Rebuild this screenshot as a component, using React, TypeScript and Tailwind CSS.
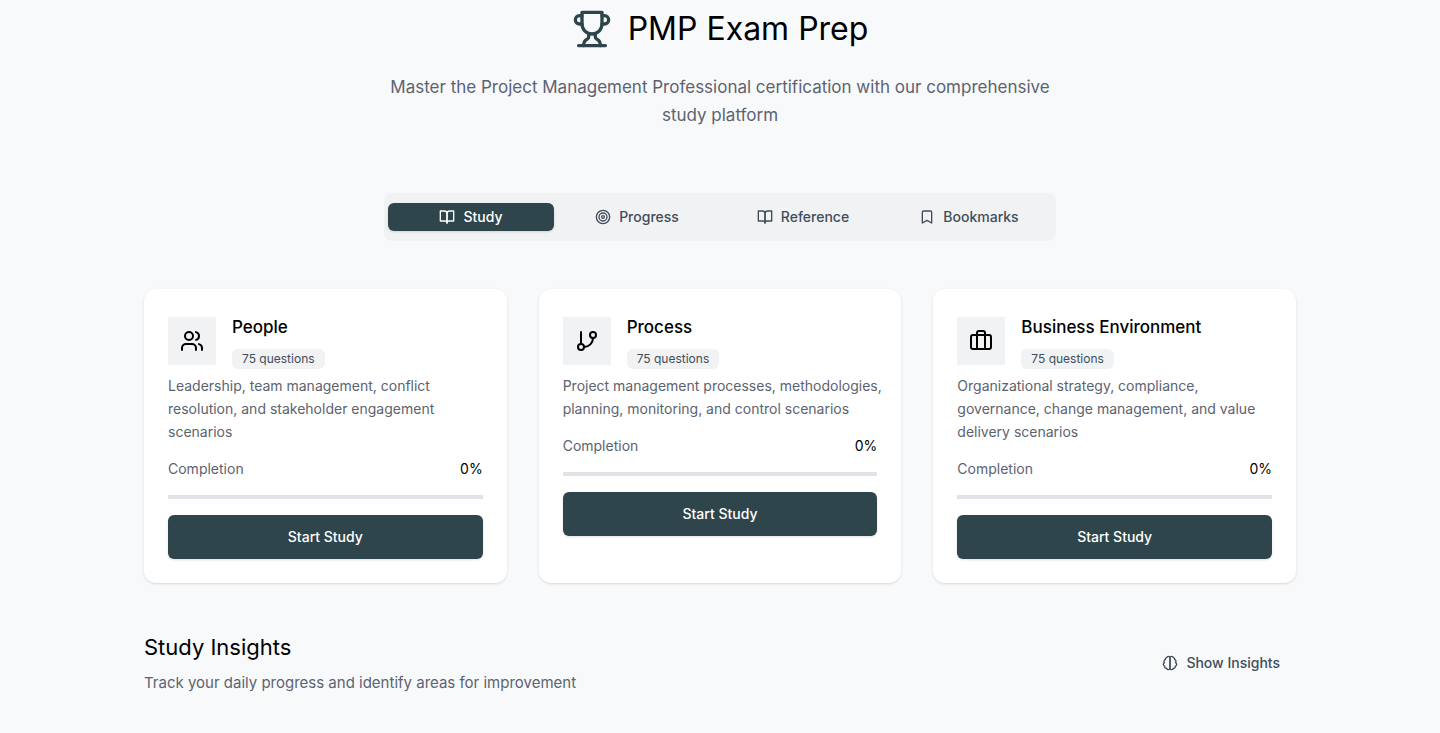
import React from 'react';
import { Target, Bookmark, Users, GitBranch, Briefcase } from 'lucide-react';

interface IconProps {
  size?: number;
  className?: string;
}

const OutlineIcon: React.FC<IconProps & { children: React.ReactNode }> = ({ size = 24, className, children }) => (
  <svg
    width={size}
    height={size}
    viewBox="0 0 24 24"
    fill="none"
    stroke="currentColor"
    strokeWidth="2"
    strokeLinecap="round"
    strokeLinejoin="round"
    className={className}
    aria-hidden="true"
  >
    {children}
  </svg>
);

const TrophyIcon: React.FC<IconProps> = (props) => (
  <OutlineIcon {...props}>
    <path d="M6 9H4.5a2.5 2.5 0 0 1 0-5H6" />
    <path d="M18 9h1.5a2.5 2.5 0 0 0 0-5H18" />
    <path d="M4 22h16" />
    <path d="M10 14.66V17c0 .55-.47.98-.97 1.21C7.85 18.75 7 20.24 7 22" />
    <path d="M14 14.66V17c0 .55.47.98.97 1.21C16.15 18.75 17 20.24 17 22" />
    <path d="M18 2H6v7a6 6 0 0 0 12 0V2Z" />
  </OutlineIcon>
);

const BookIcon: React.FC<IconProps> = (props) => (
  <OutlineIcon {...props}>
    <path d="M2 3h6a4 4 0 0 1 4 4v14a3 3 0 0 0-3-3H2z" />
    <path d="M22 3h-6a4 4 0 0 0-4 4v14a3 3 0 0 1 3-3h7z" />
  </OutlineIcon>
);

const BrainIcon: React.FC<IconProps> = (props) => (
  <OutlineIcon {...props}>
    <path d="M9.5 2A2.5 2.5 0 0 1 12 4.5v15a2.5 2.5 0 0 1-4.96.44 2.5 2.5 0 0 1-2.96-3.08 3 3 0 0 1-.34-5.58 2.5 2.5 0 0 1 1.32-4.24 2.5 2.5 0 0 1 1.98-3A2.5 2.5 0 0 1 9.5 2Z" />
    <path d="M14.5 2A2.5 2.5 0 0 0 12 4.5v15a2.5 2.5 0 0 0 4.96.44 2.5 2.5 0 0 0 2.96-3.08 3 3 0 0 0 .34-5.58 2.5 2.5 0 0 0-1.32-4.24 2.5 2.5 0 0 0-1.98-3A2.5 2.5 0 0 0 14.5 2Z" />
  </OutlineIcon>
);

const tabs = [
  { label: 'Study', icon: BookIcon, active: true },
  { label: 'Progress', icon: Target, active: false },
  { label: 'Reference', icon: BookIcon, active: false },
  { label: 'Bookmarks', icon: Bookmark, active: false },
];

const domains = [
  {
    title: 'People',
    icon: Users,
    questions: 75,
    description: 'Leadership, team management, conflict resolution, and stakeholder engagement scenarios',
    completion: 0,
  },
  {
    title: 'Process',
    icon: GitBranch,
    questions: 75,
    description: 'Project management processes, methodologies, planning, monitoring, and control scenarios',
    completion: 0,
  },
  {
    title: 'Business Environment',
    icon: Briefcase,
    questions: 75,
    description: 'Organizational strategy, compliance, governance, change management, and value delivery scenarios',
    completion: 0,
  },
];

type Domain = (typeof domains)[number];

const DomainCard: React.FC<{ domain: Domain }> = ({ domain }) => {
  const Icon = domain.icon;
  return (
    <article className="rounded-xl bg-white p-6 shadow-sm">
      <div className="flex items-center gap-4">
        <div className="flex size-12 items-center justify-center bg-[#f1f2f4]">
          <Icon size={24} />
        </div>
        <div>
          <h3 className="text-[17px] leading-7 font-medium">{domain.title}</h3>
          <span className="mt-2 inline-block rounded-md bg-[#f1f2f4] px-2.5 py-0.5 text-xs text-[#414d5b]">
            {domain.questions} questions
          </span>
        </div>
      </div>
      <p className="-mr-2 mt-[5px] text-sm leading-[23px] text-[#5c6370]">{domain.description}</p>
      <div className="mt-4 flex justify-between text-sm">
        <span className="text-[#5c6370]">Completion</span>
        <span>{domain.completion}%</span>
      </div>
      <div className="mt-4 h-1 bg-[#e2e3e9]">
        <div className="h-full bg-[#2f454c]" style={{ width: `${domain.completion}%` }} />
      </div>
      <button type="button" className="mt-4 h-11 w-full rounded-md bg-[#2f454c] text-sm font-medium text-white shadow-sm">
        Start Study
      </button>
    </article>
  );
};

export default function App() {
  return (
    <div className="min-h-screen bg-[#f8f9fb] font-['Inter',sans-serif] text-black">
      <main className="mx-auto max-w-6xl pt-[9px]">
        <header className="text-center">
          <div className="flex items-center justify-center gap-4">
            <TrophyIcon size={40} className="text-[#2f454c]" />
            <h1 className="text-[32px] leading-10">PMP Exam Prep</h1>
          </div>
          <p className="mx-auto mt-6 max-w-2xl text-[17px] leading-7 text-[#5c6370]">
            Master the Project Management Professional certification with our comprehensive study platform
          </p>
        </header>
        <nav className="mx-auto mt-16 grid h-12 max-w-2xl grid-cols-4 items-center rounded-lg bg-[#f1f2f4] p-1">
          {tabs.map(({ label, icon: Icon, active }) => (
            <button
              key={label}
              type="button"
              className={`flex h-7 items-center justify-center gap-2 rounded-md text-sm font-medium ${active ? 'bg-[#2f454c] text-white shadow-sm' : 'text-[#414d5b]'}`}
            >
              <Icon size={16} />
              {label}
            </button>
          ))}
        </nav>
        <section className="mt-12 grid grid-cols-3 gap-8">
          {domains.map((domain) => (
            <DomainCard key={domain.title} domain={domain} />
          ))}
        </section>
        <section className="mt-12 flex items-center justify-between">
          <div>
            <h2 className="text-[22px] leading-8">Study Insights</h2>
            <p className="mt-2 text-[15px] leading-6 text-[#5c6370]">
              Track your daily progress and identify areas for improvement
            </p>
          </div>
          <button type="button" className="flex items-center gap-2 px-4 text-sm font-medium text-[#414d5b]">
            <BrainIcon size={16} />
            Show Insights
          </button>
        </section>
      </main>
    </div>
  );
}
